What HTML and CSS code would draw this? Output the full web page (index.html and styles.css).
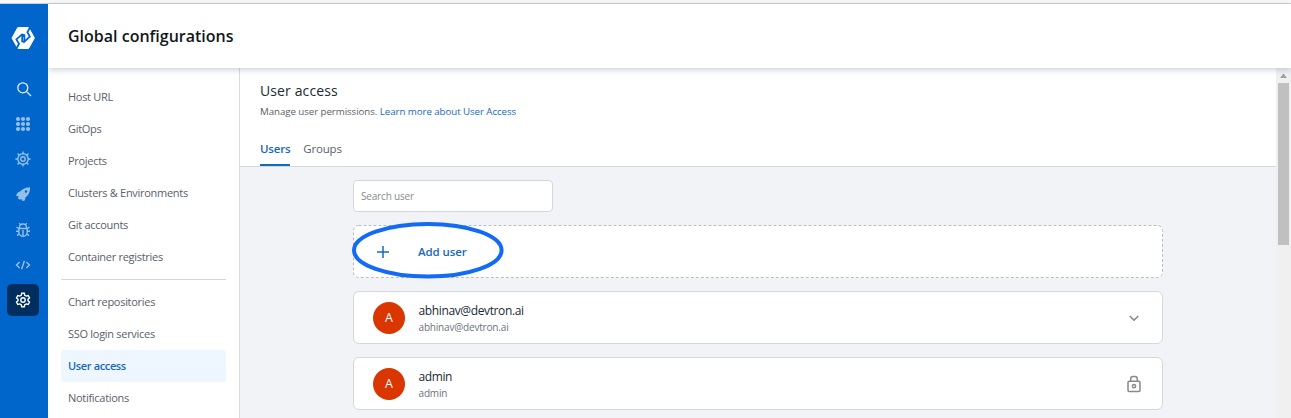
FILE: index.html
```html
<!DOCTYPE html>
<html lang="en">
<head>
<meta charset="utf-8">
<title>Global configurations</title>
<link rel="stylesheet" href="styles.css">
</head>
<body>
<div class="topline"></div>
<div class="app">
  <aside class="rail">
    <svg class="logo" width="26" height="24" viewBox="0 0 26 24"><path fill="#fff" stroke="#fff" stroke-linejoin="round" d="M7.8 1.6H18.6L24.4 12L18.6 22.4H7.8L2 12Z"/><path fill="none" stroke="#06c" stroke-width="1.8" d="M20.2 1L17.4 6.2L19.8 10.6L14.4 15.6V9.2L12 8.4L6.4 13.4L9 17.8L6.2 23M14.4 9.2L12.2 10.6V15.4L14.4 15.6"/></svg>
    <svg class="ico search" viewBox="0 0 16 16"><circle cx="6.8" cy="6.8" r="5"/><path d="M10.6 10.6L15 15"/></svg>
    <svg class="ico grid dim" viewBox="0 0 16 16"><g class="solid"><circle cx="3" cy="3" r="2.1"/><circle cx="8" cy="3" r="2.1"/><circle cx="13" cy="3" r="2.1"/><circle cx="3" cy="8" r="2.1"/><circle cx="8" cy="8" r="2.1"/><circle cx="13" cy="8" r="2.1"/><circle cx="3" cy="13" r="2.1"/><circle cx="8" cy="13" r="2.1"/><circle cx="13" cy="13" r="2.1"/></g></svg>
    <svg class="ico dim" viewBox="0 0 16 16"><circle cx="8" cy="8" r="5.2"/><circle cx="8" cy="8" r="2.2"/><path d="M8 .4V3M8 13V15.6M.4 8H3M13 8H15.6M2.6 2.6L4.4 4.4M11.6 11.6L13.4 13.4M2.6 13.4L4.4 11.6M11.6 4.4L13.4 2.6"/></svg>
    <svg class="ico rocket dim" viewBox="0 0 16 16"><path class="solid" fill-rule="evenodd" d="M15 1.2C15.4 6 13.4 9.2 10.6 11.2L9.8 14.4L7.4 15L6.2 13L4.8 13.8L2.8 12.2L3.8 10.8L1 9.6L2.4 6.8L5 5.6C7.5 2.6 10.8 1.4 15 1.2ZM11 4.2a1.3 1.3 0 1 0 0 2.6a1.3 1.3 0 0 0 0-2.6Z"/></svg>
    <svg class="ico dim" viewBox="0 0 16 16"><path d="M3.8 6.5H12.2V10A4.2 4.4 0 0 1 3.8 10ZM4.5 6.5V5.4A3.5 3.4 0 0 1 11.5 5.4V6.5M8 8V14M1 9.2H4M12 9.2H15M4 7L1.6 5M12 7L14.4 5M4.3 11.8L2 13.6M11.7 11.8L14 13.6M5.6 2.8L4.2 1.2M10.4 2.8L11.8 1.2"/></svg>
    <svg class="ico dim" viewBox="0 0 16 16"><path d="M4.7 5L1.5 8L4.7 11M11.3 5L14.5 8L11.3 11M9.4 3.8L6.6 12.2"/></svg>
    <span class="active"><svg class="ico" viewBox="0 0 16 16"><path d="M6.7 1.3H9.3L9.8 3.3L11.2 4.1L13.2 3.5L14.5 5.8L13 7.2V8.8L14.5 10.2L13.2 12.5L11.2 11.9L9.8 12.7L9.3 14.7H6.7L6.2 12.7L4.8 11.9L2.8 12.5L1.5 10.2L3 8.8V7.2L1.5 5.8L2.8 3.5L4.8 4.1L6.2 3.3Z"/><circle cx="8" cy="8" r="2.2"/></svg></span>
  </aside>
  <div class="page">
    <header class="header"><h1>Global configurations</h1></header>
    <div class="body">
      <nav class="nav">
        <a>Host URL</a><a>GitOps</a><a>Projects</a><a>Clusters &amp; Environments</a><a>Git accounts</a><a>Container registries</a>
        <hr>
        <a>Chart repositories</a><a>SSO login services</a><a class="current">User access</a><a>Notifications</a>
      </nav>
      <main class="main">
        <section class="intro">
          <h2>User access</h2>
          <p>Manage user permissions. <a>Learn more about User Access</a></p>
          <div class="tabs"><a class="tab selected">Users</a><a class="tab">Groups</a></div>
        </section>
        <section class="list">
          <input class="field" type="text" placeholder="Search user">
          <div class="card add">
            <svg class="outline" width="810" height="54"><rect x=".5" y=".5" width="809" height="52" rx="5"/></svg>
            <svg class="plus" width="12" height="12" viewBox="0 0 12 12"><path d="M6 0V12M0 6H12"/></svg>
            <span class="addlabel">Add user</span>
            <svg class="ring" width="154" height="58" viewBox="0 0 154 58"><ellipse cx="76.8" cy="28.3" rx="73.8" ry="26.3"/></svg>
          </div>
          <div class="card">
            <span class="avatar">A</span>
            <div class="who"><span class="name">abhinav@devtron.ai</span><span class="sub">abhinav@devtron.ai</span></div>
            <svg class="end" width="16" height="16" viewBox="0 0 16 16"><path d="M3.7 6L8 10.1L12.3 6"/></svg>
          </div>
          <div class="card">
            <span class="avatar">A</span>
            <div class="who"><span class="name short">admin</span><span class="sub">admin</span></div>
            <svg class="end" width="16" height="18" viewBox="0 0 16 18"><rect x="2" y="6.2" width="12" height="10.2" rx="1.2"/><path d="M4.7 6V4Q4.7 1.5 7 1.5H9Q11.3 1.5 11.3 4V6"/><circle cx="8" cy="11.2" r="1.6"/></svg>
          </div>
        </section>
      </main>
      <div class="scroll"><svg width="15" height="15" viewBox="0 0 15 15"><path fill="#a0a0a0" d="M4 10L7.5 5.5L11 10Z"/></svg><div class="thumb"></div></div>
    </div>
  </div>
</div>
</body>
</html>
```
FILE: styles.css
```css
* { box-sizing: border-box; }
body { margin: 0; height: 418px; overflow: hidden; font-family: "Open Sans", "Noto Sans", sans-serif; font-size: 11px; color: #596168; background: #fff; }
.topline { height: 4px; background: #f8f8f8; border-bottom: 1px solid #ccced1; }
.app { display: flex; height: 414px; }
.rail { width: 48px; background: #06c; display: flex; flex-direction: column; align-items: center; padding: 22px 2px 0 0; flex: none; }
.logo { flex: none; margin-bottom: 31px; }
.ico { width: 16px; height: 16px; flex: none; fill: none; stroke: #fff; stroke-width: 1.4; margin-bottom: 19.2px; }
.ico .solid { fill: #fff; stroke: none; }
.dim { opacity: .58; }
.search { margin-left: 2px; stroke-width: 1.3; opacity: .9; }
.rocket { margin-top: -1px; margin-bottom: 20.2px; }
.active { width: 32px; height: 32px; border-radius: 5px; background: #002f5f; display: flex; align-items: center; justify-content: center; margin-top: -8px; flex: none; }
.active .ico { margin: 0; }
.page { flex: 1; display: flex; flex-direction: column; min-width: 0; }
.header { height: 64px; flex: none; display: flex; align-items: center; padding-left: 20px; background: #fff; box-shadow: 0 2px 6px rgba(60, 95, 125, .27); position: relative; }
h1, h2, p { margin: 0; font-weight: 400; }
h1 { font-size: 16px; line-height: 24px; font-weight: 600; color: #11171c; }
.body { flex: 1; display: flex; min-height: 0; }
.nav { width: 192px; flex: none; border-right: 1px solid #d7dbdf; padding: 13px 13px 0; }
.nav a { display: block; height: 32px; line-height: 32px; padding-left: 7px; border-radius: 3px; white-space: nowrap; letter-spacing: -.29px; }
.nav hr { border: 0; height: 1px; background: #d3d8dc; margin: 6px 0; }
.nav .current { background: #eef6ff; color: #1769bd; font-weight: 600; letter-spacing: -.36px; }
.main { flex: 1; background: #f1f3f7; }
.intro { height: 99px; background: #fff; border-bottom: 1px solid #d3d8dc; padding: 13px 20px 0; display: flex; flex-direction: column; }
h2 { font-size: 14px; line-height: 20px; letter-spacing: .12px; color: #202a33; }
.intro p { font-size: 9.75px; line-height: 16px; margin-top: 3px; white-space: nowrap; letter-spacing: -.08px; }
.intro p a { color: #1769bd; }
.tabs { display: flex; gap: 13px; margin-top: auto; height: 34px; }
.tab { font-size: 11.5px; line-height: 34px; height: 34px; letter-spacing: -.2px; }
.selected { color: #1769bd; font-weight: 600; border-bottom: 2px solid #1769bd; }
.list { width: 810px; margin: 0 auto; padding-top: 13px; display: flex; flex-direction: column; }
.field { width: 200px; height: 32px; border: 1px solid #d3d8dc; border-radius: 4px; padding: 0 7px; font: 10px "Open Sans", sans-serif; letter-spacing: -.18px; background: #fff; margin-bottom: 13px; }
.field::placeholder { color: #858b90; opacity: 1; }
.card { height: 53px; flex: none; background: #fff; border: 1px solid #d3d8dc; border-radius: 6px; display: flex; align-items: center; padding: 0 20px 0 19px; margin-bottom: 13px; }
.add { position: relative; border: 0; padding-left: 24px; }
.outline { position: absolute; left: 0; top: 0; fill: none; stroke: #b9bdc1; stroke-dasharray: 3 2; }
.plus { stroke: #1769bd; stroke-width: 1.5; }
.addlabel { margin-left: 29px; font-size: 11.5px; font-weight: 600; color: #1769bd; letter-spacing: -.1px; }
.ring { position: absolute; left: -2px; top: -3px; fill: none; stroke: #126af5; stroke-width: 4; }
.avatar { width: 32px; height: 32px; border-radius: 50%; background: #d93600; color: #fff; font-size: 12.5px; display: flex; align-items: center; justify-content: center; }
.who { display: flex; flex-direction: column; margin-left: 13.5px; padding-top: 2px; }
.name { font-size: 12px; line-height: 17px; color: #202a33; letter-spacing: -.37px; }
.short { letter-spacing: -.4px; }
.sub { font-size: 10px; line-height: 16px; color: #6b747b; letter-spacing: -.18px; }
.end { margin-left: auto; fill: none; stroke: #858b90; stroke-width: 1.5; }
.scroll { width: 15px; flex: none; background: #f0f0f0; display: flex; flex-direction: column; align-items: center; }
.thumb { width: 11px; height: 162px; background: #c0c0c0; }
```
